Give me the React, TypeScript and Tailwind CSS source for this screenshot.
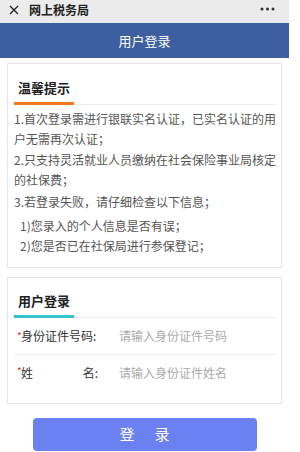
import React from "react";

const Tab = ({ title, color }: { title: string; color: string }) => (
  <div className="flex flex-col">
    <div className="pl-[4px] h-[20px] leading-[20px] text-[13px] font-bold text-[#222]">{title}</div>
    <div className="flex items-end mt-[4px]">
      <div className={`w-[60px] h-[3px] ${color}`} />
      <div className="flex-1 h-px bg-[#ececec]" />
    </div>
  </div>
);

export default function App() {
  return (
    <div className="w-[300px] h-[452px] bg-white overflow-hidden font-['Noto_Sans_CJK_SC','Noto_Sans',sans-serif]">
      <div className="w-[289px]">
        {/* top system bar */}
        <div className="h-[23px] bg-[#ececec] flex items-start pt-[3px] relative">
          <svg width="10" height="10" viewBox="0 0 10 10" className="ml-[9px] mt-[2px]">
            <path d="M1 1 L9 9 M9 1 L1 9" stroke="#222" strokeWidth="1.3" />
          </svg>
          <span className="ml-[10px] text-[12px] leading-[14px] font-bold text-[#222]">网上税务局</span>
          <svg width="16" height="4" viewBox="0 0 16 4" className="ml-auto mr-[13px] mt-[4px]">
            <circle cx="2" cy="2" r="1.5" fill="#333" />
            <circle cx="7.5" cy="2" r="1.5" fill="#333" />
            <circle cx="13" cy="2" r="1.5" fill="#333" />
          </svg>
        </div>
        {/* header */}
        <div className="h-[35px] bg-[#3d5fa1] flex items-center justify-center text-white text-[13px]">
          用户登录
        </div>

        {/* tips card */}
        <div className="mx-[7px] mt-[5px] border border-[#e6e6e6] shadow-[0_0_2px_rgba(0,0,0,0.04)] px-[6px] pt-[14px] pb-[11px]">
          <Tab title="温馨提示" color="bg-[#ef7a22]" />
          <div className="mt-[4px] text-[12px] leading-[20px] text-[#555] whitespace-nowrap">
            <div>1.首次登录需进行银联实名认证，已实名认证的用</div>
            <div>户无需再次认证；</div>
            <div className="mt-[1px]">2.只支持灵活就业人员缴纳在社会保险事业局核定</div>
            <div>的社保费；</div>
            <div className="mt-[2px]">3.若登录失败，请仔细检查以下信息；</div>
            <div className="mt-[4px] pl-[6px]">1)您录入的个人信息是否有误；</div>
            <div className="pl-[6px]">2)您是否已在社保局进行参保登记；</div>
          </div>
        </div>

        {/* login card */}
        <div className="mx-[7px] mt-[9px] border border-[#e6e6e6] shadow-[0_0_2px_rgba(0,0,0,0.04)] px-[6px] pt-[13px] pb-[13px]">
          <Tab title="用户登录" color="bg-[#33c4cd]" />
          <div className="h-[37px] flex items-center border-b border-[#ececec] pl-[3px] text-[12px]">
            <span className="text-[#e02a2a] text-[10px] leading-none self-start mt-[13px] w-[4px]">*</span>
            <span className="w-[98px] text-[#333]">身份证件号码:</span>
            <span className="text-[#aaa]">请输入身份证件号码</span>
          </div>
          <div className="h-[35px] flex items-center pl-[3px] text-[12px]">
            <span className="text-[#e02a2a] text-[10px] leading-none self-start mt-[11px] w-[4px]">*</span>
            <span className="w-[98px] text-[#333]">
              <span className="w-[77px] flex justify-between">
                <span>姓</span>
                <span>名:</span>
              </span>
            </span>
            <span className="text-[#aaa]">请输入身份证件姓名</span>
          </div>
        </div>

        {/* button */}
        <div className="mt-[14px] mx-auto w-[224px] h-[33px] rounded-[4px] bg-[#6b80f1] flex items-center justify-center gap-[20px] text-white text-[15px]">
          <span>登</span>
          <span>录</span>
        </div>
      </div>
    </div>
  );
}
